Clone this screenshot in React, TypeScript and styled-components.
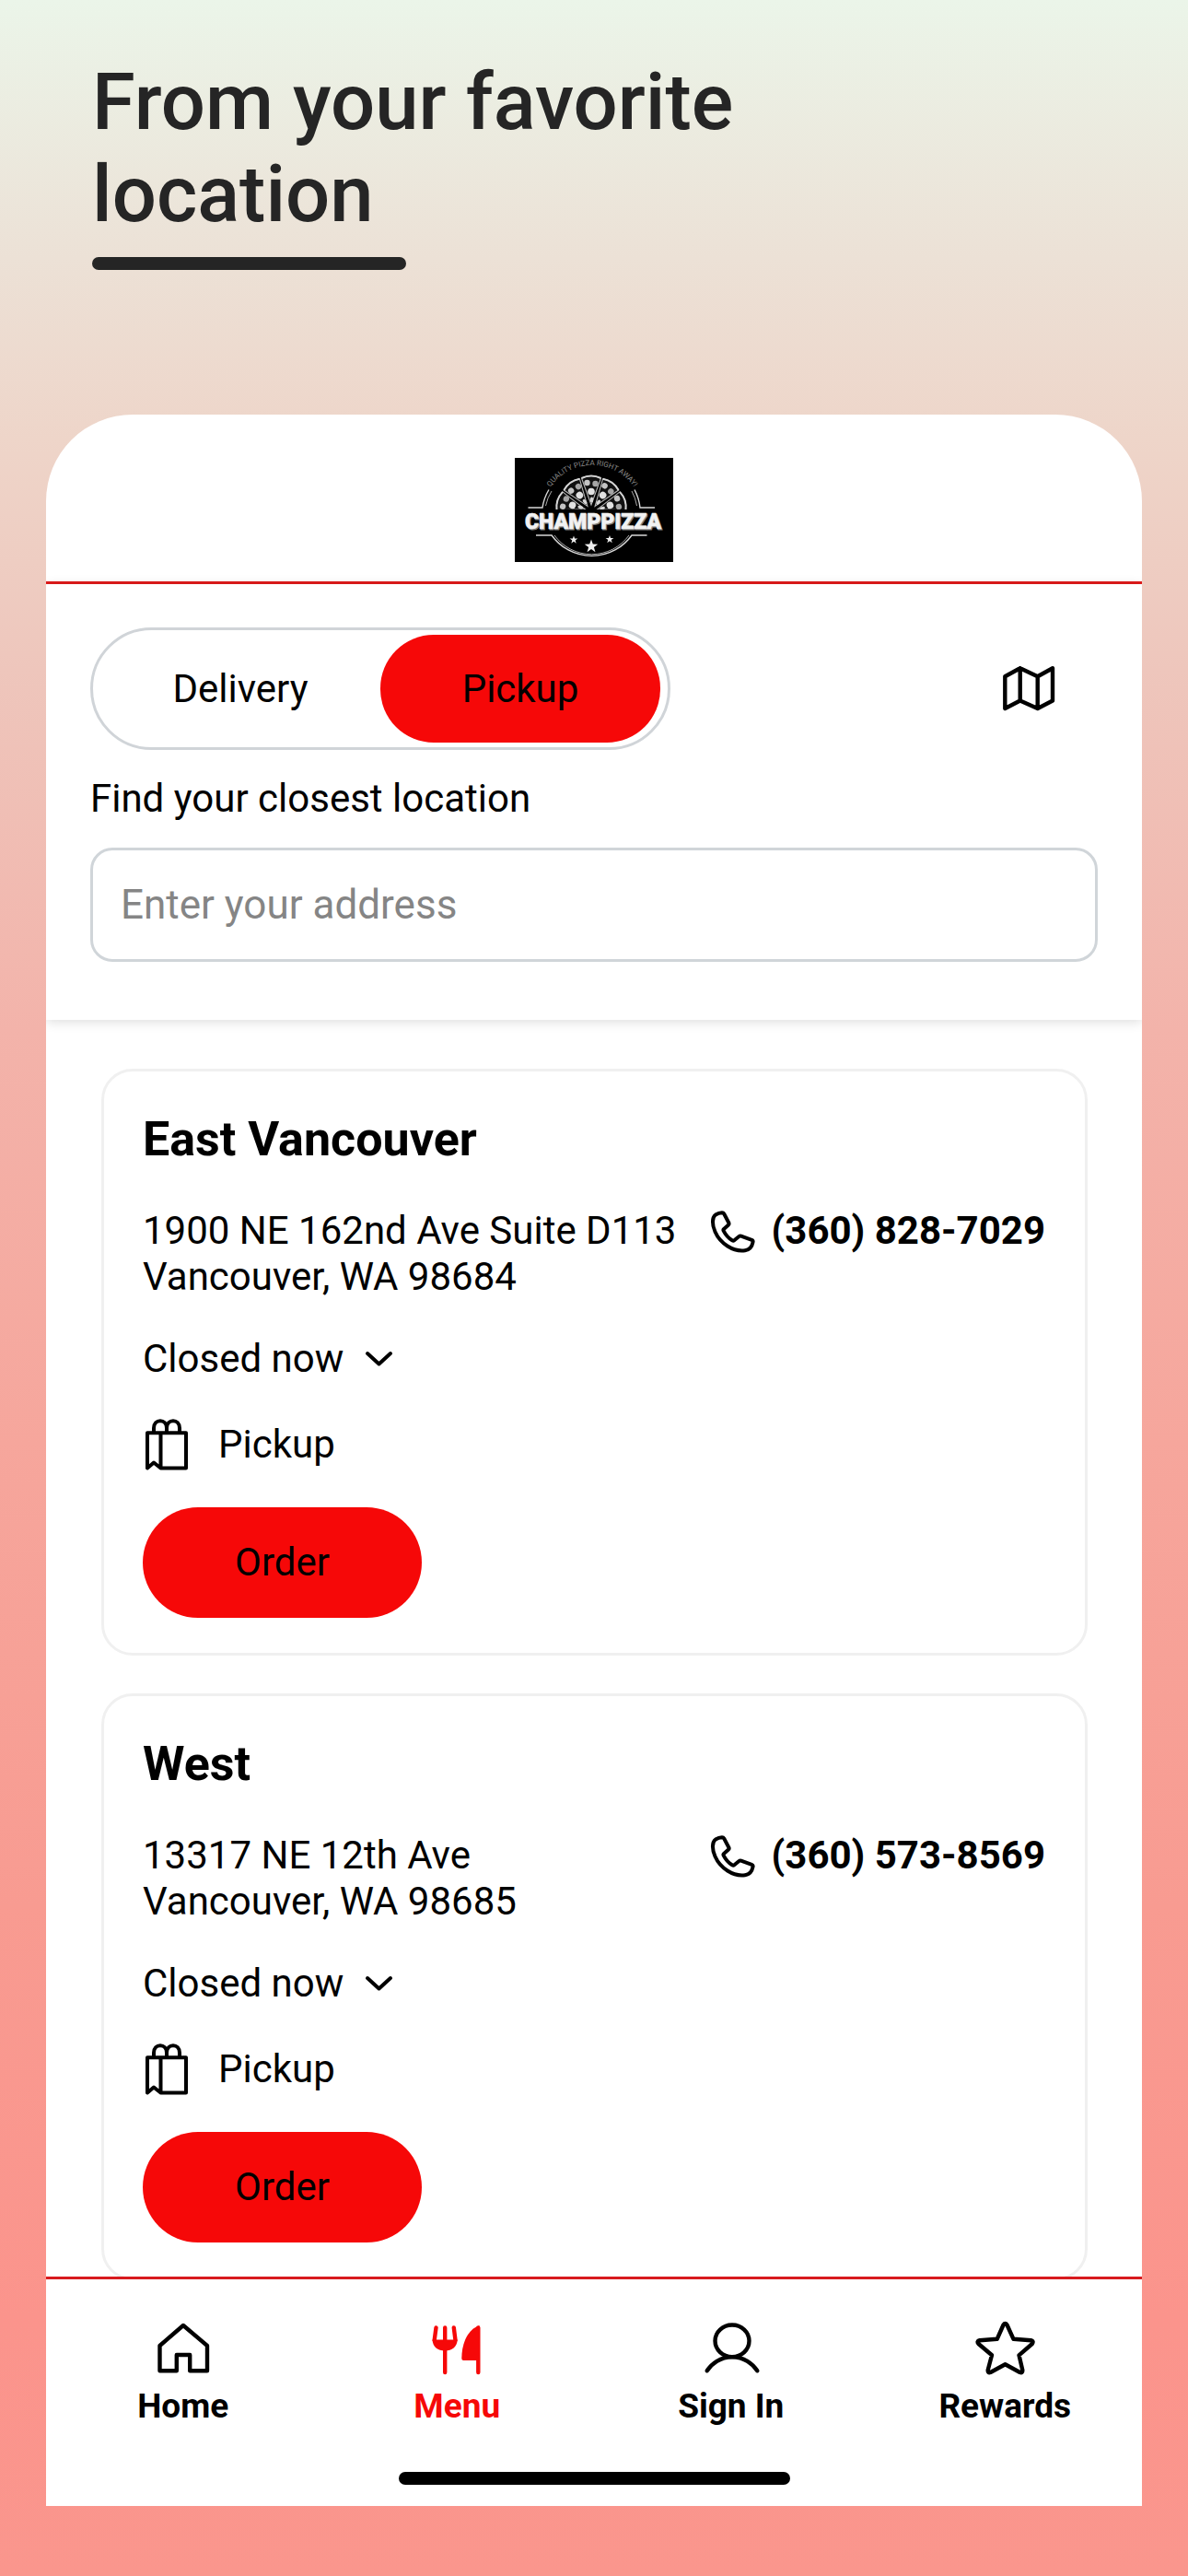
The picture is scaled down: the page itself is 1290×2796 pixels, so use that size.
import { useState } from 'react'
import styled, { createGlobalStyle } from 'styled-components'

const GlobalStyle = createGlobalStyle`
  * {
    box-sizing: border-box;
  }
  body {
    margin: 0;
    color: #000;
    font-family: Roboto, 'Liberation Sans', sans-serif;
    font-size: 42px;
    line-height: 48px;
  }
  button, input {
    font: inherit;
    color: inherit;
  }
  button {
    border: none;
    padding: 0;
    background: none;
    cursor: pointer;
  }
  a {
    color: inherit;
    text-decoration: none;
  }
  svg {
    display: block;
    flex: none;
    overflow: visible;
  }
`

const Page = styled.div`
  display: flex;
  flex-direction: column;
  height: 100vh;
  background: linear-gradient(#ebf5e9 0%, #ece1d6 10%, #eed5c9 17%, #eec6bc 26%, #f3b3aa 40%, #f6a69c 56%, #f89b91 74%, #fb948c 90%, #fa968d 100%);
`

const Hero = styled.header`
  padding: 61px 100px 157px;
`

const Headline = styled.h1`
  max-width: 900px;
  margin: 0;
  color: #252525;
  font-size: 85px;
  font-weight: 500;
  line-height: 100px;
`

const Underline = styled.div`
  width: 341px;
  height: 14px;
  margin-top: 18px;
  border-radius: 7px;
  background: #252525;
`

const Phone = styled.main`
  display: flex;
  flex: 1;
  flex-direction: column;
  min-height: 0;
  margin: 0 50px 76px;
  border-radius: 94px 94px 0 0;
  background: #fff;
  overflow: hidden;
`

const Brand = styled.div`
  display: flex;
  justify-content: center;
  padding: 47px 0 21px;
  border-bottom: 3px solid #e01b1b;
`

const Finder = styled.section`
  display: flex;
  flex-direction: column;
  gap: 29px;
  padding: 47px 48px 63px;
  box-shadow: 0 2px 12px rgba(0, 0, 0, 0.14);
  z-index: 1;
`

const FinderTop = styled.div`
  display: flex;
  justify-content: space-between;
`

const Toggle = styled.div`
  display: flex;
  width: 630px;
  padding: 5px 8px;
  border: 3px solid #d0d4d8;
  border-radius: 67px;
`

const ToggleButton = styled.button<{ $active: boolean }>`
  flex: 1;
  height: 117px;
  border-radius: 58px;
  background: ${({ $active }) => ($active ? '#f60808' : 'transparent')};
`

const MapButton = styled.button`
  display: flex;
  align-items: center;
  justify-content: center;
  width: 150px;
`

const AddressInput = styled.input`
  width: 100%;
  height: 124px;
  padding: 0 30px;
  border: 3px solid #d0d5d9;
  border-radius: 24px;
  background: #fff;
  font-size: 44px;
  &::placeholder {
    color: #858585;
    opacity: 1;
  }
`

const List = styled.section`
  display: flex;
  flex: 1;
  flex-direction: column;
  gap: 41px;
  min-height: 0;
  padding: 53px 59px 0 60px;
  overflow: hidden;
`

const Card = styled.article`
  display: flex;
  flex: none;
  flex-direction: column;
  align-items: flex-start;
  gap: 40px;
  padding: 46px 43px 38px 42px;
  border: 3px solid #f0f0f0;
  border-radius: 34px;
`

const CardTitle = styled.h2`
  margin: 0 0 6px;
  font-size: 52px;
  font-weight: 700;
  line-height: 56px;
`

const Contact = styled.div`
  display: flex;
  align-items: flex-start;
  justify-content: space-between;
  width: 100%;
`

const Address = styled.address`
  font-style: normal;
  line-height: 50px;
`

const PhoneLink = styled.a`
  display: flex;
  align-items: center;
  gap: 18px;
  font-weight: 700;
  line-height: 50px;
  white-space: nowrap;
`

const Hours = styled.button`
  display: flex;
  align-items: center;
  gap: 24px;
`

const Service = styled.div`
  display: flex;
  align-items: center;
  gap: 31px;
`

const OrderButton = styled.button`
  width: 303px;
  height: 120px;
  border-radius: 60px;
  background: #f60808;
`

const TabBar = styled.nav`
  display: flex;
  padding-top: 45px;
  border-top: 3px solid #d81a1e;
  background: #fff;
`

const Tab = styled.a<{ $active?: boolean }>`
  display: flex;
  flex: 1;
  flex-direction: column;
  align-items: center;
  gap: 13px;
  color: ${({ $active }) => ($active ? '#f60808' : '#000')};
  font-size: 37px;
  font-weight: 700;
  line-height: 40px;
`

const HomeIndicator = styled.div`
  flex: none;
  width: 425px;
  height: 14px;
  margin: 51px auto 23px;
  border-radius: 7px;
  background: #000;
`

const LogoText = styled.text`
  font-size: 23px;
  font-weight: 900;
  text-anchor: middle;
`

const LogoTagline = styled.text`
  fill: #8a8a8a;
  font-size: 8px;
  text-anchor: middle;
`

const stroke = {
  fill: 'none',
  stroke: 'currentColor',
  strokeWidth: 4.4,
  strokeLinecap: 'round',
  strokeLinejoin: 'round',
} as const

const starPoints = (cx: number, cy: number, r: number) =>
  Array.from({ length: 10 }, (_, i) => {
    const angle = (Math.PI / 5) * i - Math.PI / 2
    const radius = i % 2 ? r * 0.4 : r
    return `${cx + radius * Math.cos(angle)},${cy + radius * Math.sin(angle)}`
  }).join(' ')

const Logo = () => (
  <svg width='172' height='113' viewBox='0 0 172 113' role='img' aria-label='Champpizza'>
    <rect width='172' height='113' fill='#000' />
    <path id='tagline' d='M34 40 A55 55 0 0 1 134 40' fill='none' />
    <LogoTagline>
      <textPath href='#tagline' startOffset='50%'>QUALITY PIZZA RIGHT AWAY!</textPath>
    </LogoTagline>
    <g fill='none' stroke='#d8d8d8' strokeWidth='1.4'>
      <path d='M14.5 54 H30 A53.5 53.5 0 0 1 37 34.5' />
      <path d='M152 54 H136 A53.5 53.5 0 0 0 130 34.5' />
      <path d='M33.5 52 A50 50 0 0 1 40 36 M132.5 52 A50 50 0 0 0 127 36' strokeWidth='0.8' />
      <path d='M23 84 H40 A53.5 53.5 0 0 0 127 84 H143.5' />
      <path d='M43 84 A50 50 0 0 0 124 84' strokeWidth='0.8' />
    </g>
    {[-72, -36, 0, 36, 72].map((angle) => (
      <g key={angle} transform={`translate(83 58) rotate(${angle})`}>
        <path d='M0 -7 L-10.5 -36 Q0 -41 10.5 -36 Z' fill='#111' stroke='#b5b5b5' strokeWidth='1.1' />
        <path d='M-10.5 -36 Q0 -41 10.5 -36' fill='none' stroke='#d5d5d5' strokeWidth='2' />
        <circle cx='-4.5' cy='-31' r='3.2' fill='#c4c4c4' />
        <circle cx='4.5' cy='-30' r='3.2' fill='#a5a5a5' />
        <circle cx='0' cy='-21.5' r='3.8' fill='#e2e2e2' />
        <ellipse cx='0.5' cy='-12.5' rx='1.7' ry='3' fill='#d5d5d5' />
      </g>
    ))}
    <rect x='14' y='56' width='144' height='26' fill='#000' />
    <LogoText x='86' y='78' fill='#808080' stroke='#808080'>CHAMPPIZZA</LogoText>
    <LogoText x='85' y='77' fill='#f2f2f2' stroke='#f2f2f2' strokeWidth='0.6'>CHAMPPIZZA</LogoText>
    <g fill='#eee'>
      <polygon points={starPoints(64, 89, 4.6)} />
      <polygon points={starPoints(83, 96, 7.6)} />
      <polygon points={starPoints(103, 88.5, 4.6)} />
    </g>
  </svg>
)

const MapIcon = () => (
  <svg width='56' height='48' viewBox='0 0 56 48' {...stroke}>
    <path d='M2.3 10.3 L18.7 1.3 L37.7 10.3 L54 1.3 V36.5 L37.7 45 L18.7 36.5 L2.3 45 Z M18.7 1.3 V36.5 M37.7 10.3 V45' />
  </svg>
)

const PhoneIcon = () => (
  <svg width='49' height='47' viewBox='0 0 49 47' {...stroke} strokeWidth={4}>
    <path d='M6 5.5 C8.5 4 11 3.3 13 3.2 Q14.5 3.2 15.2 4.5 L20.5 14.5 Q21 15.7 20 16.6 L15 21 Q14 22 14.8 23.2 C17 27.5 20 31 24 33.3 Q25.3 34 26.3 33.2 L31.5 29 Q32.5 28.2 33.7 28.6 L45.3 32.8 Q47 33.5 46.5 35.3 C45.5 40.5 43 43.5 38 44.2 C25 46 11 36.5 5.5 24 C2 16 2 8.5 6 5.5 Z' />
  </svg>
)

const ChevronIcon = () => (
  <svg width='29' height='16' viewBox='0 0 29 16' {...stroke} strokeWidth={4}>
    <path d='M2 2 L14.5 13.5 L27 2' />
  </svg>
)

const BagIcon = () => (
  <svg width='51' height='57' viewBox='-2 0 51 57' {...stroke} strokeWidth={4}>
    <path d='M3 16.3 H45 V54.5 H17.5 L10 48.5 L3 54.5 Z M17.5 16.3 V54.5' />
    <path d='M10 16 V11 C10 0.5 24 0.5 24 11 V16 M24 11 C24 0.5 38 0.5 38 11 V16' />
  </svg>
)

const HomeIcon = () => (
  <svg width='60' height='60' viewBox='0 0 60 60' {...stroke}>
    <path d='M30 5 L56 27 V54.3 H37.2 V37 H22.8 V54.3 H4.5 V27 Z' />
  </svg>
)

const MenuIcon = () => (
  <svg width='60' height='60' viewBox='0 0 60 60' {...stroke}>
    <path d='M7.5 7.5 L5.7 21 M17.2 7.5 V56 M26.8 7.5 L28.5 21' />
    <path d='M3.6 20.5 H30.6 C30.6 28 25 32.5 17.2 32.5 C9 32.5 3.6 28 3.6 20.5 Z' fill='currentColor' stroke='none' />
    <path d='M53.3 7.5 V56' />
    <path d='M54.5 5.3 C43 8.5 35.3 23 35.3 41 Q35.3 43 37.3 43 H54.5 Z' fill='currentColor' stroke='none' />
  </svg>
)

const UserIcon = () => (
  <svg width='60' height='60' viewBox='0 0 60 60' {...stroke}>
    <ellipse cx='31' cy='21.8' rx='18.5' ry='17.3' />
    <path d='M3.7 54.3 A32.3 32.3 0 0 1 58.3 54.3' />
  </svg>
)

const StarIcon = () => (
  <svg width='60' height='60' viewBox='0 0 60 60' {...stroke}>
    <path d='M28.5 4.5 Q30.5 1.5 32.5 4.5 L39.5 19.8 L58.5 21.2 Q61.8 22 59.8 25 L45.5 37.3 L49.3 53.5 Q49.5 57 46.5 56 L30.5 47.3 L14.5 56 Q11.5 57 11.7 53.5 L16 37.3 L1.5 25 Q-0.8 22 2.7 21.2 L21.7 19.8 Z' />
  </svg>
)

const locations = [
  {
    name: 'East Vancouver',
    street: '1900 NE 162nd Ave Suite D113',
    city: 'Vancouver, WA 98684',
    phone: '(360) 828-7029',
  },
  {
    name: 'West',
    street: '13317 NE 12th Ave',
    city: 'Vancouver, WA 98685',
    phone: '(360) 573-8569',
  },
]

const tabs = [
  { label: 'Home', Icon: HomeIcon },
  { label: 'Menu', Icon: MenuIcon },
  { label: 'Sign In', Icon: UserIcon },
  { label: 'Rewards', Icon: StarIcon },
]

const App = () => {
  const [mode, setMode] = useState('Pickup')

  return (
    <Page>
      <GlobalStyle />
      <Hero>
        <Headline>From your favorite location</Headline>
        <Underline />
      </Hero>
      <Phone>
        <Brand>
          <Logo />
        </Brand>
        <Finder>
          <FinderTop>
            <Toggle>
              {['Delivery', 'Pickup'].map((name) => (
                <ToggleButton
                  key={name}
                  type='button'
                  $active={mode === name}
                  aria-pressed={mode === name}
                  onClick={() => setMode(name)}
                >
                  {name}
                </ToggleButton>
              ))}
            </Toggle>
            <MapButton type='button' aria-label='Map'>
              <MapIcon />
            </MapButton>
          </FinderTop>
          <label htmlFor='address'>Find your closest location</label>
          <AddressInput id='address' type='text' placeholder='Enter your address' />
        </Finder>
        <List>
          {locations.map(({ name, street, city, phone }) => (
            <Card key={name}>
              <CardTitle>{name}</CardTitle>
              <Contact>
                <Address>
                  {street}
                  <br />
                  {city}
                </Address>
                <PhoneLink href={`tel:${phone.replace(/\D/g, '')}`}>
                  <PhoneIcon />
                  {phone}
                </PhoneLink>
              </Contact>
              <Hours type='button'>
                Closed now
                <ChevronIcon />
              </Hours>
              <Service>
                <BagIcon />
                Pickup
              </Service>
              <OrderButton type='button'>Order</OrderButton>
            </Card>
          ))}
        </List>
        <TabBar>
          {tabs.map(({ label, Icon }) => (
            <Tab key={label} href='#' $active={label === 'Menu'}>
              <Icon />
              {label}
            </Tab>
          ))}
        </TabBar>
        <HomeIndicator />
      </Phone>
    </Page>
  )
}

export default App
